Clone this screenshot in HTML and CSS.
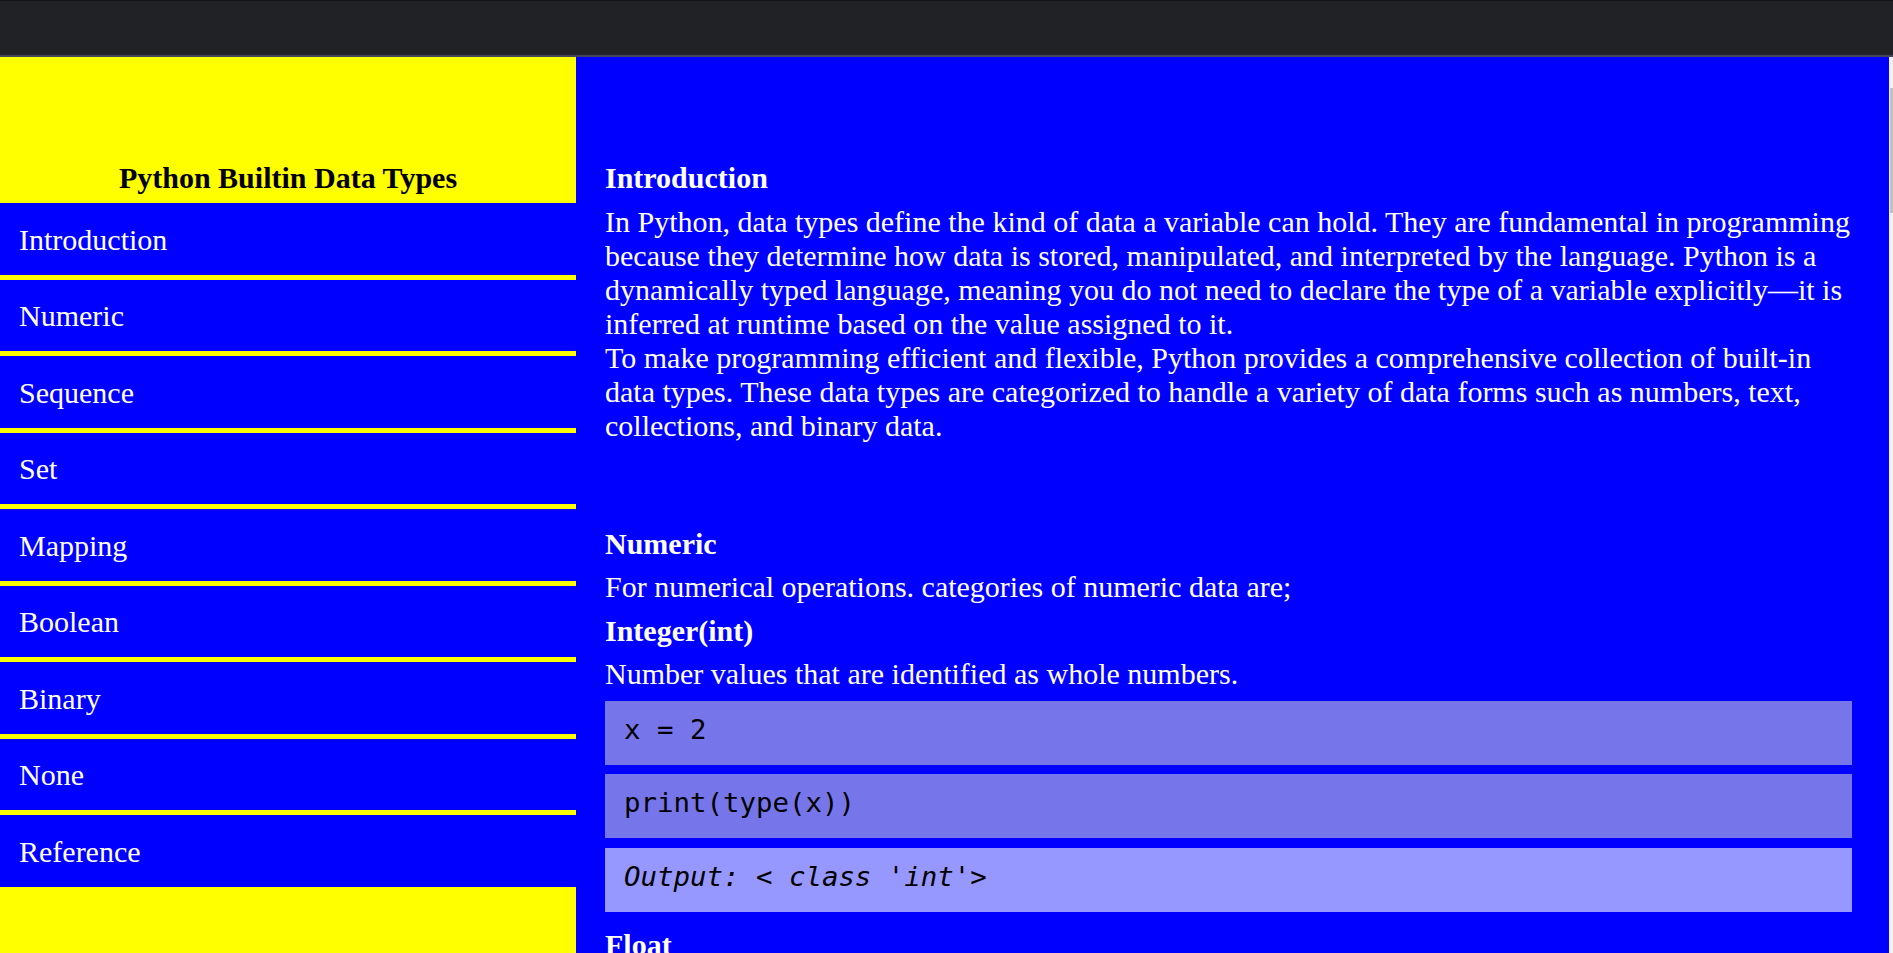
FILE: index.html
```html
<!DOCTYPE html>
<html lang="en">
<head>
<meta charset="utf-8">
<title>Python Builtin Data Types</title>
<link rel="stylesheet" href="styles.css">
</head>
<body>
<div class="topbar"></div>
<div class="page">
  <aside class="sidebar">
    <h1 class="title">Python Builtin Data Types</h1>
    <ul class="nav">
      <li class="nav-item">Introduction</li>
      <li class="nav-item">Numeric</li>
      <li class="nav-item">Sequence</li>
      <li class="nav-item">Set</li>
      <li class="nav-item">Mapping</li>
      <li class="nav-item">Boolean</li>
      <li class="nav-item">Binary</li>
      <li class="nav-item">None</li>
      <li class="nav-item">Reference</li>
    </ul>
  </aside>
  <main class="content">
    <section class="section">
      <h2 class="heading">Introduction</h2>
      <div class="text">
        <p class="para">In Python, data types define the kind of data a variable can hold. They are fundamental in programming because they determine how data is stored, manipulated, and interpreted by the language. Python is a dynamically typed language, meaning you do not need to declare the type of a variable explicitly—it is inferred at runtime based on the value assigned to it.</p>
        <p class="para">To make programming efficient and flexible, Python provides a comprehensive collection of built-in data types. These data types are categorized to handle a variety of data forms such as numbers, text, collections, and binary data.</p>
      </div>
    </section>
    <section class="section">
      <h2 class="heading">Numeric</h2>
      <p class="para">For numerical operations. categories of numeric data are;</p>
      <h3 class="heading">Integer(int)</h3>
      <p class="para">Number values that are identified as whole numbers.</p>
      <pre class="code">x = 2</pre>
      <pre class="code">print(type(x))</pre>
      <pre class="code output">Output: &lt; class 'int'&gt;</pre>
      <h3 class="heading">Float</h3>
      <p class="para">Number values that contain a decimal point.</p>
    </section>
  </main>
  <div class="scrollbar"><div class="thumb"></div></div>
</div>
</body>
</html>
```

FILE: styles.css
```css
html, body {
  margin: 0;
  padding: 0;
  height: 953px;
  overflow: hidden;
}

body {
  font-family: "Liberation Serif", "Times New Roman", serif;
  font-size: 30px;
  line-height: 34px;
  background: #0000ff;
}

.topbar {
  height: 54px;
  background: #212226;
  border-top: 1px solid #141416;
  border-bottom: 2px solid #45465a;
}

.page {
  display: flex;
  height: 896px;
  overflow: hidden;
}

.sidebar {
  width: 576px;
  flex: 0 0 576px;
  background: #ffff00;
  display: flex;
  flex-direction: column;
}

.title {
  margin: 0;
  padding: 104px 0 8px;
  font-size: 30px;
  line-height: 34px;
  font-weight: bold;
  text-align: center;
  color: #000;
}

.nav {
  list-style: none;
  margin: 0;
  padding: 0;
}

.nav-item {
  background: #0000ff;
  color: #fff;
  padding: 19.5px 19px 18px;
  border-bottom: 5px solid #ffff00;
}

.content {
  flex: 1;
  background: #0000ff;
  color: #fff;
  padding: 104px 37px 0 29px;
  display: flex;
  flex-direction: column;
  gap: 84px;
  overflow: hidden;
}

.section {
  display: flex;
  flex-direction: column;
  gap: 9.5px;
}

.heading {
  margin: 0;
  font-size: 30px;
  line-height: 34px;
  font-weight: bold;
}

.text {
  display: flex;
  flex-direction: column;
}

.para {
  margin: 0;
}

.code {
  margin: 0;
  background: #7676ea;
  color: #000;
  font-family: "DejaVu Sans Mono", "Liberation Mono", monospace;
  font-size: 27.4px;
  line-height: 34px;
  padding: 12px 19px 18px;
  white-space: pre;
}

.output {
  background: #9698ff;
  font-style: italic;
  margin-bottom: 7px;
}

.scrollbar {
  width: 4px;
  flex: 0 0 4px;
  background: #f1f1f4;
}

.thumb {
  margin: 31px 0 0 1px;
  width: 3px;
  height: 125px;
  background: #c1c1c1;
}
```
